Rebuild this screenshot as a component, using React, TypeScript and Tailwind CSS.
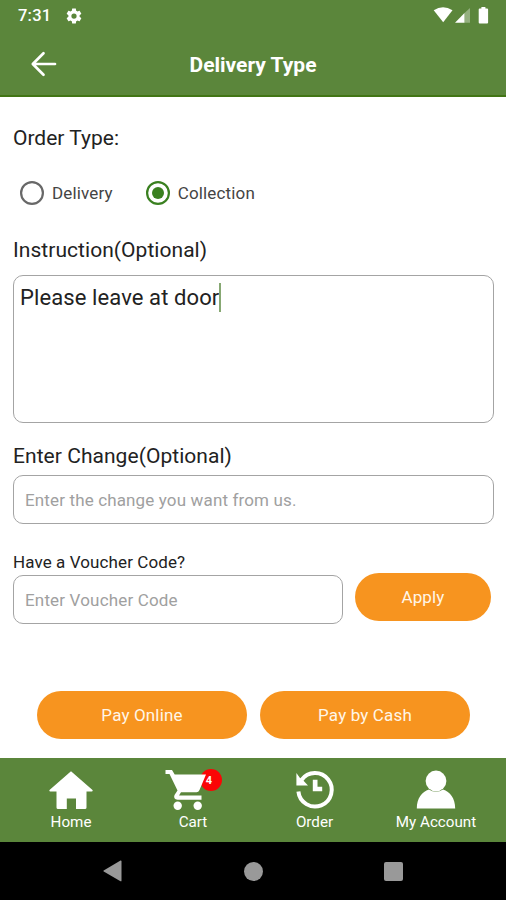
import type { ReactNode } from "react";

function StatusBar() {
  return (
    <div className="flex h-8 items-center justify-between pl-[18px] pr-[15px]">
      <div className="flex items-center">
        <span className="w-[47px] text-[16.5px] font-medium leading-8 tracking-[0.2px]">7:31</span>
        <svg className="h-[18px] w-[18px]" viewBox="0 0 24 24" fill="white">
          <path d="M19.43 12.98c.04-.32.07-.64.07-.98s-.03-.66-.07-.98l2.11-1.65c.19-.15.24-.42.12-.64l-2-3.46c-.12-.22-.39-.3-.61-.22l-2.49 1c-.52-.4-1.08-.73-1.69-.98l-.38-2.65C14.46 2.18 14.25 2 14 2h-4c-.25 0-.46.18-.49.42l-.38 2.65c-.61.25-1.17.59-1.69.98l-2.49-1c-.23-.09-.49 0-.61.22l-2 3.46c-.13.22-.07.49.12.64l2.11 1.65c-.04.32-.07.65-.07.98s.03.66.07.98l-2.11 1.65c-.19.15-.24.42-.12.64l2 3.46c.12.22.39.3.61.22l2.49-1c.52.4 1.08.73 1.69.98l.38 2.65c.03.24.24.42.49.42h4c.25 0 .46-.18.49-.42l.38-2.65c.61-.25 1.17-.59 1.69-.98l2.49 1c.23.09.49 0 .61-.22l2-3.46c.12-.22.07-.49-.12-.64l-2.11-1.65zM12 15.500a3.500 3.500 0 1 1 0-7 3.500 3.500 0 0 1 0 7z" />
        </svg>
      </div>
      <svg className="h-[18px] w-[58px]" viewBox="0 0 58 18" fill="white">
        <path d="M.7 3.200Q10 -2.800 19.500 3.200L10.200 15.300Z" />
        <path d="M22 15.700 31.500 6v9.700z" />
        <path d="M31.500 6 37 1v14.700h-5.500z" opacity=".35" />
        <path d="M46.700 1.500h1.700V0h4v1.500h1.700q1 0 1 1v13q0 1-1 1h-7.400q-1 0-1-1v-13q0-1 1-1z" />
      </svg>
    </div>
  );
}

function Header() {
  return (
    <header className="h-[97px] border-b-2 border-[#427515] bg-[#5b863b] text-white">
      <StatusBar />
      <div className="grid h-[65px] grid-cols-[80px_1fr_80px] items-center">
        <svg className="mb-[2px] ml-[30px] h-[26px] w-[28px]" viewBox="0 0 28 26" fill="none" stroke="white" strokeWidth="2.700" strokeLinecap="round" strokeLinejoin="round">
          <path d="M25 13H3M13.500 2.300 2.800 13l10.700 10.700" />
        </svg>
        <h1 className="text-center text-[21px] font-bold leading-7">Delivery Type</h1>
      </div>
    </header>
  );
}

function Radio({ checked = false, children }: { checked?: boolean; children: ReactNode }) {
  return (
    <label className="flex items-center gap-2">
      {checked ? (
        <svg className="h-6 w-6" viewBox="0 0 24 24">
          <circle cx="12" cy="12" r="10.900" fill="none" stroke="#3a8020" strokeWidth="2.200" />
          <circle cx="12" cy="12" r="6" fill="#3a8020" />
        </svg>
      ) : (
        <svg className="h-6 w-6" viewBox="0 0 24 24">
          <circle cx="12" cy="12" r="10.900" fill="none" stroke="#686868" strokeWidth="2.200" />
        </svg>
      )}
      <span className="text-[17px] leading-6 tracking-[0.15px] text-[#444]">{children}</span>
    </label>
  );
}

function Pill({ className, children }: { className: string; children: ReactNode }) {
  return (
    <button className={`h-12 rounded-full bg-[#f7941f] text-[17px] leading-6 tracking-[0.15px] text-[#fff6e8] ${className}`}>{children}</button>
  );
}

function NavItem({ label, className, children }: { label: string; className: string; children: ReactNode }) {
  return (
    <div className={`flex flex-col items-center ${className}`}>
      <div className="relative h-[42px] w-[44px]">{children}</div>
      <span className="whitespace-nowrap text-[15.200px] leading-[21px]">{label}</span>
    </div>
  );
}

function BottomNav() {
  return (
    <nav className="flex h-[84px] bg-[#5b863b] pt-3 text-white">
      <NavItem label="Home" className="w-[142px]">
        <svg className="h-[42px] w-[44px]" viewBox="0 0 44 42" fill="white">
          <path d="M22 1.300 43.500 20q.6 1.300-.8 1.500H37.500v16q0 1.500-1.500 1.500H27V28.500H17.800V39H9q-1.500 0-1.500-1.500v-16H1.300Q0 21.300.5 20Z" />
        </svg>
      </NavItem>
      <NavItem label="Cart" className="w-[102px]">
        <span className="absolute left-[29px] top-[-1px] flex h-[22px] w-[22px] items-center justify-center rounded-full bg-[#fb0505] pr-1 text-[11px] font-bold leading-none">4</span>
        <svg className="absolute left-0 top-0 h-[42px] w-[44px] overflow-visible" viewBox="0 0 44 42" fill="white">
          <path d="M-5.500 0H1L3.700 4.500H35L28.500 20q-1 2.200-3 2.200H10L8 25.500H30.500V29.800H6.500Q2 29 3.500 25L6.500 20.500-1.500 4H-5.500Z" />
          <circle cx="6.700" cy="35.700" r="4.200" />
          <circle cx="26.700" cy="35.700" r="4.200" />
        </svg>
      </NavItem>
      <NavItem label="Order" className="w-[141px]">
        <svg className="h-[42px] w-[44px]" viewBox="0 0 44 42" fill="none" stroke="white">
          <path d="M8.500 10A16.700 16.700 0 1 1 5.400 21.500" strokeWidth="4" />
          <path d="M3.400 3v12.500H15l-4-4.200L7 8Z" fill="white" stroke="none" />
          <path d="M19.800 9.800h4.700v7h4.700v4.400h-9.400Z" fill="white" stroke="none" />
        </svg>
      </NavItem>
      <NavItem label="My Account" className="w-[102px]">
        <svg className="h-[42px] w-[44px]" viewBox="0 0 44 42" fill="white">
          <circle cx="22" cy="11" r="10.400" />
          <path d="M2.800 38.500C2.800 28 8 22 15 19.500q7 4.500 14 0C36 22 41.200 28 41.200 38.500Z" />
        </svg>
      </NavItem>
    </nav>
  );
}

function SystemBar() {
  return (
    <div className="flex h-[58px] items-center bg-black pl-[103px]">
      <svg className="h-[22px] w-[19px]" viewBox="0 0 19 22" fill="#999">
        <path d="M17.500.500Q18.500.200 18.500 1.500v19q0 1.200-1 .7L.7 11.600Q0 11 .7 10.400Z" />
      </svg>
      <div className="ml-[122px] h-[19px] w-[19px] rounded-full bg-[#999]" />
      <div className="ml-[121px] h-[19px] w-[19px] rounded-[2px] bg-[#999]" />
    </div>
  );
}

export default function App() {
  return (
    <div className="flex h-[900px] w-[506px] flex-col overflow-hidden bg-white font-['Roboto',sans-serif] text-[#222]">
      <Header />
      <main className="flex-1 pl-[13px] pr-3 pt-[27px]">
        <h2 className="text-[21px] leading-7">Order Type:</h2>
        <div className="ml-[7px] mt-[29px] flex h-6 gap-[33px]">
          <Radio>Delivery</Radio>
          <Radio checked>Collection</Radio>
        </div>
        <h2 className="mt-[31px] text-[21px] leading-7 tracking-[0.05px]">Instruction(Optional)</h2>
        <div className="mt-[11px] flex h-[148px] rounded-[10px] border border-[#a4a4a4] pl-[6px] pt-[7px]">
          <span className="text-[22px] leading-[30px] tracking-[0.1px]">Please leave at door</span>
          <span className="h-[29px] w-[2px] bg-[#87a873]" />
        </div>
        <h2 className="mt-[19px] text-[21px] leading-7 tracking-[0.05px]">Enter Change(Optional)</h2>
        <div className="mt-[5px] flex h-[49px] items-center rounded-[10px] border border-[#a4a4a4] pl-[11px] pt-[2px] text-[17px] tracking-[0.14px] text-[#a0a0a0]">
          <span>Enter the change you want from us.</span>
        </div>
        <div className="mt-[27px] flex">
          <div className="w-[330px]">
            <p className="mb-[2px] text-[17px] leading-[22px] tracking-[0.1px]">Have a Voucher Code?</p>
            <div className="flex h-[49px] items-center rounded-[10px] border border-[#a4a4a4] pl-[11px] pt-[2px] text-[17px] tracking-[0.17px] text-[#a0a0a0]">
              <span>Enter Voucher Code</span>
            </div>
          </div>
          <Pill className="ml-3 mt-[22px] w-[136px]">Apply</Pill>
        </div>
        <div className="ml-6 mt-[67px] flex gap-[13px]">
          <Pill className="w-[210px]">Pay Online</Pill>
          <Pill className="w-[210px]">Pay by Cash</Pill>
        </div>
      </main>
      <BottomNav />
      <SystemBar />
    </div>
  );
}
